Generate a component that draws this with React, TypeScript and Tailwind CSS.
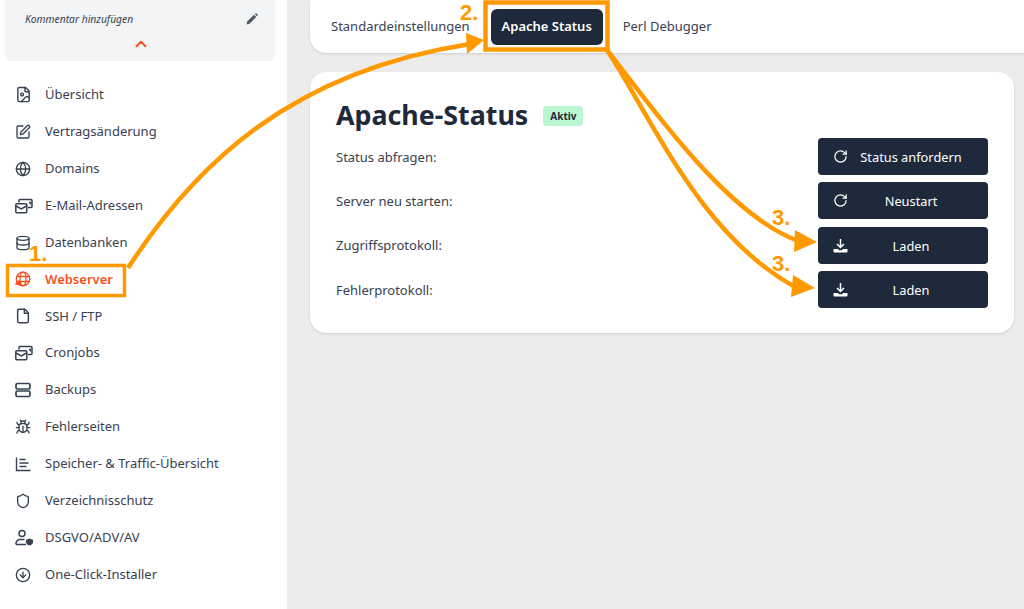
import { Bug, ChevronUp, CircleArrowDown, Database, File, FileImage, Globe, RotateCw, Shield, SquarePen } from 'lucide-react';

const MailStack = () => (
  <svg width="18" height="18" viewBox="0 0 18 18" fill="none" stroke="currentColor" strokeWidth="1.5">
    <path d="M4 5.500V3.500a1 1 0 0 1 1-1h11a1 1 0 0 1 1 1v6a1 1 0 0 1-1 1h-3" />
    <rect x="0.800" y="6.800" width="11" height="9" rx="1" />
    <path d="M1 9l5.300 3L11.500 9" />
    <path d="M14 5.500h1.500v2" />
  </svg>
);

const Drives = () => (
  <svg width="16" height="16" viewBox="0 0 16 16" fill="none" stroke="currentColor" strokeWidth="1.700">
    <rect x="1" y="1.500" width="14" height="5.500" rx="1.600" />
    <rect x="1" y="9" width="14" height="5.500" rx="1.600" />
  </svg>
);

const Chart = () => (
  <svg width="16" height="16" viewBox="0 0 16 16" fill="none" stroke="currentColor" strokeWidth="1.400">
    <path d="M1.500 1.500v13h14" />
    <path d="M4.500 3.500h6M4.500 7h9M4.500 10.500h7" />
  </svg>
);

const UserShield = () => (
  <svg width="19" height="18" viewBox="0 0 19 18" fill="none" stroke="currentColor" strokeWidth="1.500">
    <circle cx="7" cy="4.500" r="3" />
    <path d="M1 15.500v-1a4 4 0 0 1 4-4h4.500M1 15.500h10" />
    <path d="M14.500 9.500l3.500 1.200v2.300c0 1.800-1.500 3-3.500 3.500-2-.5-3.500-1.700-3.500-3.500v-2.300z" fill="currentColor" stroke="none" />
  </svg>
);

const WebGlobe = () => (
  <svg width="16" height="16" viewBox="0 0 16 16" fill="none" stroke="currentColor" strokeWidth="1.300">
    <circle cx="8" cy="8" r="6.800" />
    <ellipse cx="8" cy="8" rx="3" ry="6.800" />
    <path d="M1.400 5.500h13.200M1.400 10.500h13.200" />
    <path d="M1 13l3-3 2 4z" fill="currentColor" />
  </svg>
);

const PencilFill = () => (
  <svg width="12" height="12" viewBox="0 0 12 12" fill="#4b5563">
    <path d="M0.500 11.500l.7-3L8 1.700l2.300 2.300L3.500 10.800z" />
    <path d="M8.800 1l.7-.6a.7.7 0 0 1 1 0l1.100 1.100a.7.7 0 0 1 0 1l-.6.7z" />
  </svg>
);

const TrayDownload = () => (
  <svg width="15" height="15" viewBox="0 0 15 15" fill="none" stroke="currentColor" strokeWidth="1.500">
    <path d="M7.500 1v8M4 6l3.500 3.500L11 6" />
    <path d="M0.500 11h4.500l1 1.300h3l1-1.300h4.500v2.500a1 1 0 0 1-1 1h-12a1 1 0 0 1-1-1z" fill="currentColor" stroke="none" />
  </svg>
);

const navItems = [
  { label: 'Übersicht', icon: <FileImage size={17} strokeWidth={2} /> },
  { label: 'Vertragsänderung', icon: <SquarePen size={16} strokeWidth={2} /> },
  { label: 'Domains', icon: <Globe size={16} strokeWidth={2} /> },
  { label: 'E-Mail-Adressen', icon: <MailStack /> },
  { label: 'Datenbanken', icon: <Database size={16} strokeWidth={2} /> },
  { label: 'Webserver', icon: <WebGlobe />, active: true },
  { label: 'SSH / FTP', icon: <File size={16} strokeWidth={2.2} /> },
  { label: 'Cronjobs', icon: <MailStack /> },
  { label: 'Backups', icon: <Drives /> },
  { label: 'Fehlerseiten', icon: <Bug size={16} strokeWidth={2} /> },
  { label: 'Speicher- & Traffic-Übersicht', icon: <Chart /> },
  { label: 'Verzeichnisschutz', icon: <Shield size={16} strokeWidth={2} /> },
  { label: 'DSGVO/ADV/AV', icon: <UserShield /> },
  { label: 'One-Click-Installer', icon: <CircleArrowDown size={16} strokeWidth={2} /> },
];

const rows = [
  { label: 'Status abfragen:', button: 'Status anfordern', icon: <RotateCw size={15} strokeWidth={2} /> },
  { label: 'Server neu starten:', button: 'Neustart', icon: <RotateCw size={15} strokeWidth={2} /> },
  { label: 'Zugriffsprotokoll:', button: 'Laden', icon: <TrayDownload /> },
  { label: 'Fehlerprotokoll:', button: 'Laden', icon: <TrayDownload /> },
];

const Annotations = () => (
  <>
    <svg className="absolute left-0 top-0 pointer-events-none" width="1024" height="609" fill="none" stroke="#ff9900" strokeWidth="4.500">
      <rect x="7.500" y="265.500" width="117" height="30" strokeWidth="3.500" />
      <rect x="485.500" y="2.500" width="122" height="47" strokeWidth="4.500" />
      <path d="M128 268C195 165 290 72 470 44" />
      <path d="M484 40L466 33L467 54z" fill="#ff9900" stroke="none" />
      <path d="M607 50C665 125 730 215 798 241" />
      <path d="M817 242L795 230L794 252z" fill="#ff9900" stroke="none" />
      <path d="M607 50C650 115 700 235 795 287" />
      <path d="M815 288L793 275L791 297z" fill="#ff9900" stroke="none" />
    </svg>
    <span className="absolute left-[29px] top-[242px] font-['Liberation_Sans',sans-serif] text-[22px] leading-6 font-bold text-[#ff9900]">1.</span>
    <span className="absolute left-[460px] top-[1px] font-['Liberation_Sans',sans-serif] text-[22px] leading-6 font-bold text-[#ff9900]">2.</span>
    <span className="absolute left-[772px] top-[206px] font-['Liberation_Sans',sans-serif] text-[22px] leading-6 font-bold text-[#ff9900]">3.</span>
    <span className="absolute left-[772px] top-[252px] font-['Liberation_Sans',sans-serif] text-[22px] leading-6 font-bold text-[#ff9900]">3.</span>
  </>
);

export default function App() {
  return (
    <div className="relative flex h-[609px] w-[1024px] overflow-hidden bg-[#ececec] font-['Noto_Sans',sans-serif] text-[#374151]">
      {/* sidebar */}
      <aside className="w-[287px] shrink-0 bg-white">
        <div className="ml-[5px] mr-[12px] h-[61px] rounded-b-md bg-[#f3f4f6] pl-[20px] pr-[17px] pt-[11px]">
          <div className="flex items-center justify-between">
            <span className="text-[10.300px] italic leading-4 text-[#374151]">Kommentar hinzufügen</span>
            <PencilFill />
          </div>
          <div className="mt-[8px] flex justify-center pr-[2px]">
            <ChevronUp size={18} strokeWidth={2.5} className="text-[#f4511e]" />
          </div>
        </div>
        <nav className="mt-[15.500px]">
          {navItems.map((item) => (
            <div
              key={item.label}
              className={
                item.active
                  ? 'flex h-[36.900px] items-center text-[13px] font-semibold text-[#f4511e]'
                  : 'flex h-[36.900px] items-center text-[13px] text-[#374151]'
              }
            >
              <span className="flex w-[45px] justify-start pl-[15px]">{item.icon}</span>
              {item.label}
            </div>
          ))}
        </nav>
      </aside>

      {/* main */}
      <main className="flex-1 pl-[23px] pr-[10px]">
        <div className="-mr-[10px] flex h-[53px] items-center rounded-bl-2xl bg-white pl-[21px] text-[13px] shadow-sm">
          <span>Standardeinstellungen</span>
          <span className="ml-[21px] flex h-[36px] w-[112px] items-center justify-center rounded-md bg-[#1e293b] font-semibold text-white">
            Apache Status
          </span>
          <span className="ml-[20px]">Perl Debugger</span>
        </div>
        <section className="mt-[19px] h-[261px] rounded-2xl bg-white pl-[26px] pr-[26px] pt-[24px] shadow-sm">
          <div className="flex items-center">
            <h1 className="text-[26.800px] font-bold leading-[38px] text-[#1e293b]">Apache-Status</h1>
            <span className="ml-[15px] mt-[1px] rounded bg-[#bbf7d0] px-[7px] py-[2px] text-[10px] font-bold leading-4 text-[#1f2937]">Aktiv</span>
          </div>
          <div className="mt-[4px] flex flex-col gap-[7.300px]">
            {rows.map((row) => (
              <div key={row.label} className="flex items-center justify-between text-[13px]">
                <span className="pt-[2px]">{row.label}</span>
                <button className="relative flex h-[37px] w-[170px] items-center justify-center rounded bg-[#1e293b] pl-[16px] pt-[2px] text-[12.800px] text-white">
                  <span className="absolute left-[15px] top-[11px]">{row.icon}</span>
                  {row.button}
                </button>
              </div>
            ))}
          </div>
        </section>
      </main>

      <Annotations />
    </div>
  );
}
